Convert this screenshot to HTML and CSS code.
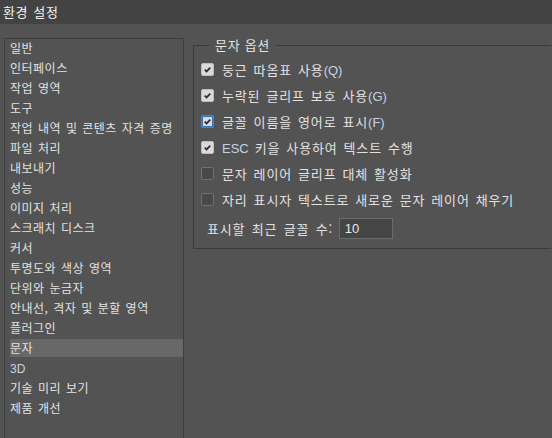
FILE: index.html
```html
<!DOCTYPE html>
<html lang="ko">
<head>
<meta charset="utf-8">
<title>환경 설정</title>
<link rel="stylesheet" href="styles.css">
</head>
<body>
<div class="titlebar">환경 설정</div>
<div class="main">
  <ul class="nav">
    <li>일반</li>
    <li>인터페이스</li>
    <li>작업 영역</li>
    <li>도구</li>
    <li>작업 내역 및 콘텐츠 자격 증명</li>
    <li>파일 처리</li>
    <li>내보내기</li>
    <li>성능</li>
    <li>이미지 처리</li>
    <li>스크래치 디스크</li>
    <li>커서</li>
    <li>투명도와 색상 영역</li>
    <li>단위와 눈금자</li>
    <li>안내선, 격자 및 분할 영역</li>
    <li>플러그인</li>
    <li class="active">문자</li>
    <li><span class="latin">3D</span></li>
    <li>기술 미리 보기</li>
    <li>제품 개선</li>
  </ul>
  <fieldset class="group">
    <legend>문자 옵션</legend>
    <label class="row"><span class="box checked"><svg viewBox="0 0 13 13"><path d="M3.2 6.6 L5.4 8.8 L9.8 4.2" /></svg></span><span>둥근 따옴표 사용<span class="latin">(Q)</span></span></label>
    <label class="row"><span class="box checked"><svg viewBox="0 0 13 13"><path d="M3.2 6.6 L5.4 8.8 L9.8 4.2" /></svg></span><span>누락된 글리프 보호 사용<span class="latin">(G)</span></span></label>
    <label class="row"><span class="box checked focus"><svg viewBox="0 0 13 13"><path d="M3.2 6.6 L5.4 8.8 L9.8 4.2" /></svg></span><span>글꼴 이름을 영어로 표시<span class="latin">(F)</span></span></label>
    <label class="row"><span class="box checked"><svg viewBox="0 0 13 13"><path d="M3.2 6.6 L5.4 8.8 L9.8 4.2" /></svg></span><span><span class="latin">ESC</span> 키을 사용하여 텍스트 수행</span></label>
    <label class="row"><span class="box"></span><span>문자 레이어 글리프 대체 활성화</span></label>
    <label class="row"><span class="box"></span><span>자리 표시자 텍스트로 새로운 문자 레이어 채우기</span></label>
    <div class="field">
      <span>표시할 최근 글꼴 수:</span>
      <span class="input">10</span>
    </div>
  </fieldset>
</div>
</body>
</html>
```
FILE: styles.css
```css
html, body {
  margin: 0;
  padding: 0;
}
body {
  width: 552px;
  height: 438px;
  overflow: hidden;
  background: #535353;
  color: #e2e2e2;
  font-family: "Noto Sans CJK KR", "Noto Sans", sans-serif;
  font-size: 13px;
}
.titlebar {
  height: 24px;
  line-height: 24px;
  background: #434343;
  color: #f2f2f2;
  padding-left: 3px;
  font-size: 13px;
  letter-spacing: 0.6px;
  word-spacing: 1px;
}
.main {
  display: flex;
  align-items: flex-start;
  padding: 14px 0 0 4px;
  gap: 9px;
}
.nav {
  list-style: none;
  margin: 0;
  padding: 0;
  width: 178px;
  height: 399px;
  border: 1px solid #3e3e3e;
  border-bottom: none;
  font-size: 12px;
  letter-spacing: 0.5px;
  word-spacing: 1px;
  flex: none;
}
.nav li {
  height: 18px;
  line-height: 18px;
  padding: 0 0 2px 5px;
  background-clip: content-box;
  white-space: nowrap;
}
.nav li.active {
  background-color: #686868;
}
.latin {
  font-family: "Liberation Sans", "Noto Sans", sans-serif;
  color: #c4d2e6;
  letter-spacing: 0;
}
.group {
  margin: 0;
  padding: 4px 0 9px 7px;
  border: 1px solid #3b3b3b;
  width: 350px;
  border-right: none;
  flex: none;
  min-width: 0;
}
.group legend {
  margin-left: 8px;
  padding: 0 6px;
  line-height: 14px;
  font-size: 13px;
  letter-spacing: 0.7px;
  color: #e2e2e2;
}
.row {
  display: flex;
  align-items: center;
  height: 26px;
  gap: 8px;
  white-space: nowrap;
  letter-spacing: 0.85px;
  word-spacing: 1.5px;
}
.box {
  width: 11px;
  height: 11px;
  border: 1px solid #707070;
  background: #494949;
  border-radius: 2px;
  display: flex;
  flex: none;
}
.box.checked {
  background: #dadada;
  border-color: #bdbdbd;
}
.box.focus {
  border-color: #3f86db;
  box-shadow: 0 0 0 1px #2f6fc0 inset;
}
.box svg {
  width: 11px;
  height: 11px;
}
.box path {
  fill: none;
  stroke: #2e2e2e;
  stroke-width: 2;
}
.field {
  display: flex;
  align-items: center;
  gap: 6px;
  margin: 6px 0 0 6px;
  letter-spacing: 0.8px;
  word-spacing: 2px;
}
.input {
  width: 47px;
  height: 19px;
  line-height: 19px;
  padding-left: 5px;
  background: #454545;
  border: 1px solid #6b6b6b;
  font-family: "Liberation Sans", "Noto Sans", sans-serif;
  color: #e8e8e8;
  font-size: 13px;
  letter-spacing: 0;
}
```
